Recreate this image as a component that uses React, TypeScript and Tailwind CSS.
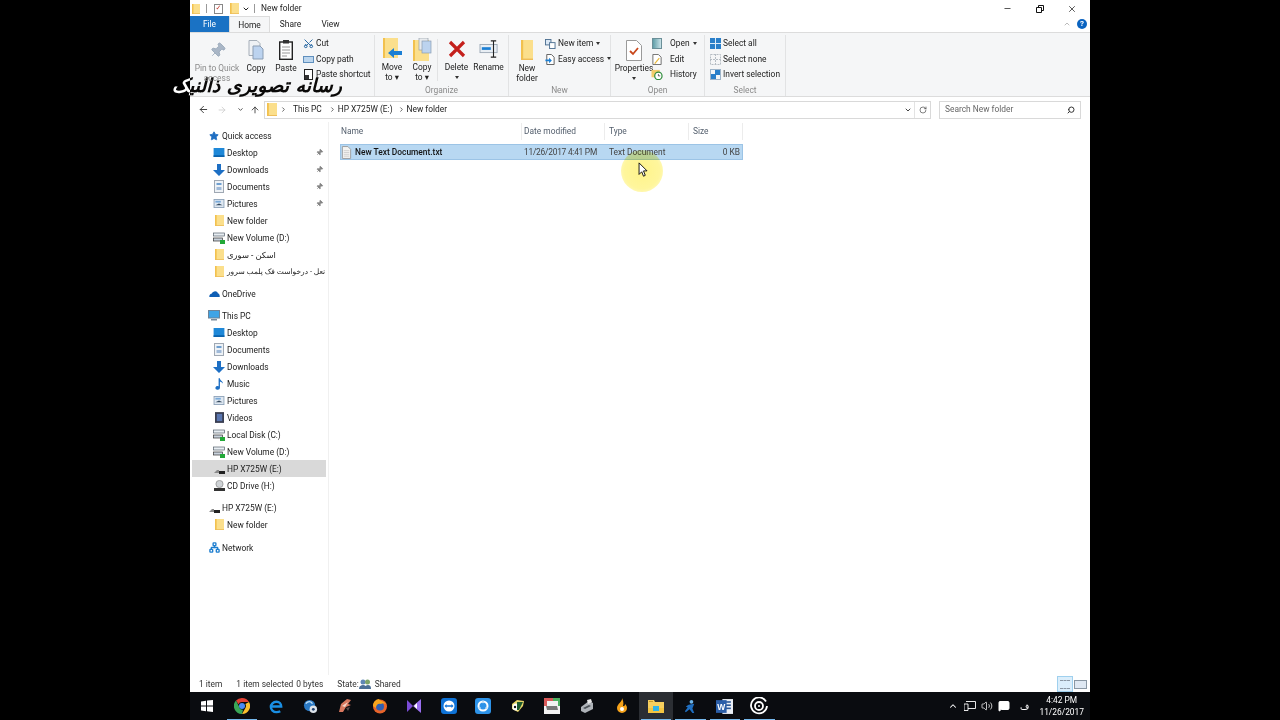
import { ChevronDown, ChevronRight, ChevronUp, ArrowLeft, ArrowRight, ArrowUp, RotateCw, Search, Minus, X, Pin, Scissors, Star, Volume2, MessageSquare, Network } from "lucide-react";

function Folder({ className = "w-[11px] h-[14px]" }: { className?: string }) {
  return (
    <svg viewBox="0 0 11 14" className={className} preserveAspectRatio="none">
      <rect x="0" y="0" width="11" height="14" fill="#fbdf8c" />
      <rect x="0" y="0" width="2" height="14" fill="#f2c14e" />
      <rect x="0" y="13" width="11" height="1" fill="#eebd58" />
    </svg>
  );
}

function DocIcon() {
  return (
    <svg viewBox="0 0 12 14" className="w-[11px] h-[13px]">
      <path d="M1.5.5h6l3 3v10h-9z" fill="#f4f4f2" stroke="#9a9a9a" />
      <path d="M3 5h6M3 7h6M3 9h6M3 11h6" stroke="#cfcfcf" strokeWidth="1" />
    </svg>
  );
}

function DesktopIcon() {
  return (
    <svg viewBox="0 0 12 10" className="w-[12px] h-[9px]">
      <rect width="12" height="10" fill="#1e88d8" />
      <rect y="8" width="12" height="2" fill="#0b63ad" />
    </svg>
  );
}

function DownIcon() {
  return (
    <svg viewBox="0 0 12 12" className="w-[12px] h-[12px]">
      <path d="M4 0h4v6h4l-6 6-6-6h4z" fill="#1d6fc4" />
    </svg>
  );
}

function DocsIcon() {
  return (
    <svg viewBox="0 0 10 13" className="w-[10px] h-[13px]">
      <rect x=".5" y=".5" width="9" height="12" fill="#eef2f6" stroke="#9fa8b3" />
      <rect x="2.5" y="3" width="5" height="2" fill="#6f9fd0" />
      <rect x="2.5" y="7" width="5" height="3" fill="#9fb9d8" />
    </svg>
  );
}

function PicIcon() {
  return (
    <svg viewBox="0 0 12 10" className="w-[12px] h-[9px]">
      <rect x=".5" y=".5" width="11" height="9" fill="#dfe8f2" stroke="#8da2b8" />
      <path d="M2 7l4-2 4 2z" fill="#33475c" />
      <rect x="2" y="2" width="6" height="2" fill="#79a9d8" />
    </svg>
  );
}

function DriveIcon() {
  return (
    <svg viewBox="0 0 12 12" className="w-[12px] h-[12px]">
      <rect x=".5" y="1" width="11" height="3" fill="#e8eef3" stroke="#55606b" strokeWidth=".7" />
      <rect x=".5" y="6" width="9" height="3" fill="#c8d2dc" stroke="#333" strokeWidth=".7" />
      <rect x="7" y="8" width="5" height="4" fill="#22a838" />
    </svg>
  );
}

function UsbIcon() {
  return (
    <svg viewBox="0 0 12 12" className="w-[12px] h-[12px]">
      <path d="M1 10l3-3h2v3z" fill="#8a8a8a" />
      <rect x="6" y="8" width="6" height="3" fill="#222" />
    </svg>
  );
}

function CdIcon() {
  return (
    <svg viewBox="0 0 12 12" className="w-[12px] h-[12px]">
      <circle cx="6.5" cy="4" r="3.6" fill="#cfd3d6" stroke="#777" strokeWidth=".6" />
      <rect x="1" y="8" width="11" height="3" fill="#333" />
    </svg>
  );
}

function NavRow({ icon, label, pinned, sub, selected, tiny }: { icon: React.ReactNode; label: string; pinned?: boolean; sub?: boolean; selected?: boolean; tiny?: boolean }) {
  return (
    <div className={`h-[17px] flex items-center mx-[2px] ${selected ? "bg-[#d9d9d9]" : ""} ${sub ? "pl-[20px]" : "pl-[15px]"}`}>
      <span className="w-[14px] flex justify-center shrink-0">{icon}</span>
      <span className={`ml-[1px] pt-[1px] whitespace-nowrap ${tiny ? "text-[7.5px]" : ""}`}>{label}</span>
      {pinned && <Pin className="ml-auto mr-[3px] w-[7px] h-[7px] text-[#777] rotate-45" fill="#888" />}
    </div>
  );
}

function LargeBtn({ w, icon, lines, caret, gray }: { w: string; icon: React.ReactNode; lines: string[]; caret?: boolean; gray?: boolean }) {
  return (
    <div className={`${w} flex flex-col items-center shrink-0 ${gray ? "text-[#8c8c8c]" : ""}`}>
      <div className="h-[26px] flex items-end justify-center">{icon}</div>
      <div className="mt-[2px] leading-[9.5px] text-center whitespace-nowrap">
        {lines.map((l) => (
          <div key={l}>{l}</div>
        ))}
      </div>
      {caret && <div className="mt-[3px] w-0 h-0 border-x-[2.5px] border-x-transparent border-t-[3px] border-t-[#333]" />}
    </div>
  );
}

function Caret() {
  return <span className="inline-block ml-[3px] mb-[1px] w-0 h-0 border-x-[2.5px] border-x-transparent border-t-[3px] border-t-[#333]" />;
}

function SmallBtn({ icon, label, caret, wide }: { icon: React.ReactNode; label: string; caret?: boolean; wide?: boolean }) {
  return (
    <div className="h-[15.5px] flex items-center whitespace-nowrap">
      <span className="w-[14px] flex justify-center shrink-0">{icon}</span>
      <span className={wide ? "ml-[6px]" : "ml-[1px]"}>{label}</span>
      {caret && <Caret />}
    </div>
  );
}

function Group({ w, label, children }: { w: string; label: string; children: React.ReactNode }) {
  return (
    <div className={`${w} shrink-0 flex flex-col border-r border-[#e2e3e4] h-[61px]`}>
      <div className="flex-1 flex">{children}</div>
      <div className="text-center text-[#8a8a8a] leading-[10px] mb-[1px]">{label}</div>
    </div>
  );
}

function Chrome() {
  return (
    <svg viewBox="0 0 16 16" className="w-[16px] h-[16px]">
      <path d="M8 0a8 8 0 0 1 7 4H8a4 4 0 0 0-3.6 2.2L2 2.6A8 8 0 0 1 8 0z" fill="#e34133" />
      <path d="M15 4a8 8 0 0 1-7 12l3.4-6A4 4 0 0 0 11.4 6z" fill="#fbc02d" />
      <path d="M2 2.6l3 6a4 4 0 0 0 4 3.2L8 16A8 8 0 0 1 2 2.6z" fill="#3aa757" />
      <circle cx="8" cy="8" r="3" fill="#4a8bf5" />
    </svg>
  );
}

const taskIcons: React.ReactNode[] = [
  <svg key="win" viewBox="0 0 12 12" className="w-[12px] h-[12px]"><path d="M0 1.5L5 .8v4.7H0zM6 .6L12 0v5.5H6zM0 6.5h5v4.7l-5-.7zM6 6.5h6V12l-6-.7z" fill="#fff" /></svg>,
  <Chrome key="chrome" />,
  <svg key="edge" viewBox="0 0 16 16" className="w-[15px] h-[15px]"><path d="M3 8h10c0-3-2-5-5-5-3.500 0-6 2.500-6 5.500S4.500 14 8 14c1.500 0 3-.4 4-1" fill="none" stroke="#1a8fe3" strokeWidth="2.600" /></svg>,
  <svg key="ie" viewBox="0 0 16 16" className="w-[15px] h-[15px]"><circle cx="7" cy="7" r="6" fill="#2a79c4" /><path d="M3 5c2-3 6-3 7 0" stroke="#bfe0f7" strokeWidth="1.500" fill="none" /><circle cx="11" cy="11" r="4" fill="#dde4ea" /><circle cx="11" cy="11" r="1.500" fill="#1e3e6b" /></svg>,
  <svg key="sm" viewBox="0 0 16 16" className="w-[16px] h-[16px]"><path d="M2 14L4 6l6-5 4 1-3 4 3 1-5 2-3 5z" fill="#d9785f" /><path d="M5 8l6-4-3 5z" fill="#f3d6c8" /><path d="M9 10l4-1-2 4z" fill="#5b4a4a" /></svg>,
  <svg key="ff" viewBox="0 0 16 16" className="w-[16px] h-[16px]"><circle cx="8" cy="8.500" r="7" fill="#e8642a" /><circle cx="8" cy="8.500" r="4" fill="#2f5fb3" /><path d="M1 8c0-4 3-7 6-7 1 2 5 2 7 5-2-1-4-1-5 0C6 5 4 7 4 10z" fill="#f9a51c" /></svg>,
  <svg key="vs" viewBox="0 0 16 16" className="w-[16px] h-[16px]"><path d="M1 2l6 6-6 6z" fill="#7b4cd8" /><path d="M15 1v14l-8-7z" fill="#9a6ff0" /><path d="M11 5v6L8 8z" fill="#fff" /></svg>,
  <svg key="tv" viewBox="0 0 16 16" className="w-[16px] h-[16px]"><rect width="16" height="16" rx="3" fill="#0e72d6" /><circle cx="8" cy="8" r="5.500" fill="#fff" /><path d="M3.500 8l2-2v1.200h5V6l2 2-2 2V8.800h-5V10z" fill="#0e72d6" /></svg>,
  <svg key="bl" viewBox="0 0 16 16" className="w-[16px] h-[16px]"><rect width="16" height="16" rx="3" fill="#2d93e8" /><circle cx="8" cy="8" r="4.500" fill="none" stroke="#fff" strokeWidth="2" /><circle cx="8" cy="4" r="1.200" fill="#bfe0f7" /><circle cx="4.500" cy="10" r="1.200" fill="#bfe0f7" /><circle cx="11.500" cy="10" r="1.200" fill="#bfe0f7" /></svg>,
  <svg key="cf" viewBox="0 0 16 16" className="w-[16px] h-[16px]"><path d="M2 6l5-4 7 1-1 5-5 6-6-3z" fill="#e8d66a" /><circle cx="6" cy="9" r="3.500" fill="#fff" /><path d="M7 4h6l-4 8H7z" fill="#1c5a2e" /><circle cx="5" cy="9" r="1.200" fill="#111" /></svg>,
  <svg key="hd" viewBox="0 0 16 16" className="w-[16px] h-[16px]"><rect y="3" width="16" height="13" fill="#f2f2f2" /><path d="M2 8h11l1 4H3z" fill="#777" /><path d="M0 0h9v3H3v5H0z" fill="#d95a5a" /><path d="M9 0h7v8H14V3H9z" fill="#4caf60" /></svg>,
  <svg key="pr" viewBox="0 0 16 16" className="w-[16px] h-[16px]"><path d="M2 9l8-6 4 2v6l-8 4-4-2z" fill="#aeb3b8" /><path d="M8 2l4-1 1 3-4 2z" fill="#e8e8e8" /><path d="M4 10l6-3 2 1-6 3z" fill="#4b5157" /></svg>,
  <svg key="fl" viewBox="0 0 16 16" className="w-[16px] h-[16px]"><path d="M9 0c1 3-5 6-5 10a5 5 0 0 0 10 0c0-2-1-3-2-4 0 2-1 2-2 2 1-3 0-6-1-8z" fill="#f5a21a" /><circle cx="9" cy="11" r="2" fill="#fff" /></svg>,
  <svg key="ex" viewBox="0 0 16 14" className="w-[16px] h-[14px]"><path d="M0 1h6l1 2h9v10H0z" fill="#f7cf5e" /><rect y="9" width="16" height="5" fill="#f4c542" /><rect x="5" y="7" width="6" height="5" fill="#30b4e8" /><rect x="1" y="2" width="4" height="1" fill="#c89a2c" /></svg>,
  <svg key="ru" viewBox="0 0 16 16" className="w-[15px] h-[15px]"><circle cx="9" cy="3" r="2" fill="#6db4e8" /><path d="M6 6l6-1-2 5 2 5-2 0-3-4-4 3-1-1 3-4-2-1z" fill="#1f6ec0" /></svg>,
  <svg key="wd" viewBox="0 0 16 16" className="w-[17px] h-[17px]"><rect x="6" y="1" width="10" height="14" fill="#e9eef5" /><rect x="8" y="3" width="6" height="1.500" fill="#2b5797" /><rect x="8" y="6" width="6" height="1.500" fill="#2b5797" /><rect x="8" y="9" width="6" height="1.500" fill="#2b5797" /><rect y="2" width="10" height="12" fill="#2b5ea8" /><text x="5" y="11" fontSize="8" fill="#fff" textAnchor="middle" fontWeight="bold" fontFamily="Liberation Sans">W</text></svg>,
  <svg key="gr" viewBox="0 0 18 18" className="w-[18px] h-[18px]"><path d="M16 4.500A8 8 0 1 0 17 9" fill="none" stroke="#fff" strokeWidth="1.800" /><circle cx="9" cy="9" r="4" fill="none" stroke="#fff" strokeWidth="1.800" /><circle cx="9" cy="9" r="1" fill="#fff" /></svg>,
];

const activeTasks = [1, 13, 14, 15, 16];

export default function App() {
  return (
    <div className="h-screen bg-black flex justify-center overflow-hidden font-['Roboto','DejaVu_Sans',sans-serif] text-[8.4px] text-[#222]">
      <div className="w-[900px] h-[720px] bg-white flex flex-col relative">
        {/* title bar */}
        <div className="h-[16px] flex items-center pl-[2px] pt-[1px] relative shrink-0">
          <Folder className="w-[8px] h-[10px]" />
          <span className="w-px h-[9px] bg-[#999] ml-[6px]" />
          <span className="ml-[7px] w-[9px] h-[10px] border border-[#888] flex items-center justify-center text-[#c0392b] text-[7px] leading-none">✓</span>
          <Folder className="ml-[7px] w-[9px] h-[11px]" />
          <ChevronDown className="ml-[3px] w-[8px] h-[8px] text-[#222]" strokeWidth={3} />
          <span className="w-px h-[9px] bg-[#999] ml-[4px]" />
          <span className="ml-[6px] text-[#222]">New folder</span>
          <div className="ml-auto flex items-center mr-[2px]">
            <Minus className="w-[9px] h-[9px] mr-[24px]" strokeWidth={2} />
            <svg viewBox="0 0 8 8" className="w-[8px] h-[8px] mr-[23px]"><path d="M.5 2.500h5v5h-5zM2.500 2.500v-2h5v5h-2" fill="none" stroke="#111" /></svg>
            <X className="w-[10px] h-[10px] mr-[11px]" strokeWidth={1.800} />
          </div>
        </div>

        {/* tabs */}
        <div className="h-[16px] flex items-stretch shrink-0 leading-[16px]">
          <div className="w-[39px] bg-[#1a72c4] text-white text-center">File</div>
          <div className="w-[41px] text-center border-x border-t border-[#dcdcdc] bg-[#f5f6f7]">Home</div>
          <div className="w-[41px] text-center">Share</div>
          <div className="w-[39px] text-center">View</div>
          <div className="ml-auto flex items-center pr-[3px]">
            <ChevronUp className="w-[8px] h-[8px] text-[#999] mr-[6px]" />
            <span className="w-[10px] h-[10px] rounded-full bg-[#0a63c0] text-white text-[8px] leading-[10px] text-center font-bold">?</span>
          </div>
        </div>

        {/* ribbon */}
        <div className="h-[65px] bg-[#f5f6f7] border-t border-[#dcdcdc] border-b flex shrink-0 pt-[2px]">
          <Group w="w-[185px]" label="">
            <div className="flex pl-[8px] pt-[1px]">
              <LargeBtn w="w-[38px]" gray lines={["Pin to Quick", "access"]} icon={<Pin className="w-[17px] h-[17px] text-[#8fa0b3] rotate-45 mb-[3px]" fill="#a9b6c6" strokeWidth={1} />} />
              <div className="w-[5px]" />
              <LargeBtn w="w-[30px]" lines={["Copy"]} icon={
                <svg viewBox="0 0 16 20" className="w-[16px] h-[20px] mb-[2px]"><path d="M1 .5h8l3 3v12H1z" fill="#eef1f4" stroke="#a5aeb8" /><path d="M5 6h7l3 3v10H5z" fill="#bcd3ef" stroke="#8b9db3" /></svg>
              } />
              <LargeBtn w="w-[30px]" lines={["Paste"]} icon={
                <svg viewBox="0 0 14 20" className="w-[14px] h-[20px] mb-[2px]"><rect x=".7" y="2" width="12.600" height="17.300" fill="#fff" stroke="#222" strokeWidth="1.400" /><rect x="4" y="0" width="6" height="3.500" fill="#333" /><path d="M3 7h8M3 10h8M3 13h8M3 16h5" stroke="#999" /></svg>
              } />
              <div className="flex flex-col">
                <SmallBtn label="Cut" icon={<Scissors className="w-[11px] h-[11px] text-[#1c5f9e] -rotate-90" />} />
                <SmallBtn label="Copy path" icon={<span className="w-[11px] h-[7px] bg-[#bcd6ee] border border-[#5f8fbd]" />} />
                <SmallBtn label="Paste shortcut" icon={<span className="w-[9px] h-[11px] border border-[#222] bg-white flex items-end"><span className="w-[4px] h-[4px] bg-[#333]" /></span>} />
              </div>
            </div>
          </Group>
          <Group w="w-[134px]" label="Organize">
            <div className="flex pl-[2px]">
              <LargeBtn w="w-[30px]" lines={["Move", "to ▾"]} icon={
                <svg viewBox="0 0 19 23" className="w-[19px] h-[23px]"><rect width="15" height="20" fill="#fbdf8c" /><rect width="2" height="20" fill="#f2c14e" /><path d="M19 13h-8v-3l-6 5 6 5v-3h8z" fill="#1b7fd4" /></svg>
              } />
              <LargeBtn w="w-[30px]" lines={["Copy", "to ▾"]} icon={
                <svg viewBox="0 0 19 23" className="w-[19px] h-[23px]"><rect y="2" width="16" height="21" fill="#fbdf8c" /><rect y="2" width="2" height="21" fill="#f2c14e" /><rect x="6" y="0" width="9" height="12" fill="#e8ebee" stroke="#97a0aa" strokeWidth=".7" /><rect x="9" y="3" width="9" height="12" fill="#bcd3ef" stroke="#8b9db3" strokeWidth=".7" /></svg>
              } />
              <div className="w-px h-[42px] bg-[#e2e3e4] mt-[4px]" />
              <LargeBtn w="w-[37px]" lines={["Delete"]} caret icon={
                <svg viewBox="0 0 18 18" className="w-[18px] h-[18px] mb-[3px]"><path d="M2 2l14 14M16 2L2 16" stroke="#c4201c" strokeWidth="3.200" /></svg>
              } />
              <LargeBtn w="w-[27px]" lines={["Rename"]} icon={
                <svg viewBox="0 0 22 20" className="w-[20px] h-[18px] mb-[3px]"><rect x="1" y="5" width="19" height="9" fill="#e8eef4" stroke="#9aa7b4" /><rect x="3" y="8" width="10" height="3" fill="#1b7fd4" /><path d="M13 1h6M16 1v18M13 19h6" stroke="#222" strokeWidth="1.200" fill="none" /></svg>
              } />
            </div>
          </Group>
          <Group w="w-[102px]" label="New">
            <div className="flex pl-[2px] pt-[1px]">
              <LargeBtn w="w-[32px]" lines={["New", "folder"]} icon={<Folder className="w-[12px] h-[20px] mb-[2px]" />} />
              <div className="flex flex-col">
                <SmallBtn caret label="New item" icon={<svg viewBox="0 0 12 11" className="w-[11px] h-[10px]"><rect x=".5" y=".5" width="6" height="6" fill="#dbe8f5" stroke="#4a6d8f" /><rect x="5" y="4" width="6" height="6.500" fill="#fff" stroke="#4a6d8f" /></svg>} />
                <SmallBtn caret label="Easy access" icon={<svg viewBox="0 0 10 12" className="w-[10px] h-[11px]"><path d="M1.500.5h5l3 3v8h-8z" fill="#fff" stroke="#555" /><path d="M0 6h4V4l3 3-3 3V8H0z" fill="#1b7fd4" /></svg>} />
              </div>
            </div>
          </Group>
          <Group w="w-[94px]" label="Open">
            <div className="flex pt-[1px]">
              <LargeBtn w="w-[46px]" lines={["Properties"]} caret icon={
                <svg viewBox="0 0 16 21" className="w-[16px] h-[21px] mb-[1px]"><path d="M.5.500h10l5 5v15H.5z" fill="#fff" stroke="#9a9a9a" /><path d="M4 11l3 3 5-6" stroke="#c9471c" strokeWidth="1.800" fill="none" /></svg>
              } />
              <div className="flex flex-col ml-[-7px]">
                <SmallBtn wide caret label="Open" icon={<span className="w-[10px] h-[11px] bg-gradient-to-r from-[#5f9ea8] to-[#c9e2e8] border border-[#6b8f98]" />} />
                <SmallBtn wide label="Edit" icon={<svg viewBox="0 0 10 12" className="w-[10px] h-[11px]"><path d="M.5.500h6l3 3v8h-9z" fill="#fff" stroke="#666" /><path d="M2 10l5-6 1 1-5 6z" fill="#e8b93c" /></svg>} />
                <SmallBtn wide label="History" icon={<svg viewBox="0 0 12 12" className="w-[12px] h-[11px]"><rect y="1" width="9" height="8" fill="#f2cc6a" /><circle cx="7.500" cy="7.500" r="4" fill="#fff" stroke="#2f8c3c" strokeWidth="1.300" /><path d="M7.500 5.500v2h2" stroke="#333" fill="none" strokeWidth=".8" /></svg>} />
              </div>
            </div>
          </Group>
          <Group w="w-[81px]" label="Select">
            <div className="flex flex-col pl-[3px] pt-[1px]">
              <SmallBtn label="Select all" icon={<svg viewBox="0 0 11 11" className="w-[11px] h-[11px]"><rect width="11" height="11" fill="#2a7fc9" /><path d="M5.500 0v11M0 5.500h11" stroke="#dcecf9" /></svg>} />
              <SmallBtn label="Select none" icon={<svg viewBox="0 0 11 11" className="w-[11px] h-[11px]"><rect x=".5" y=".5" width="10" height="10" fill="none" stroke="#b5bcc3" strokeDasharray="2 1" /><path d="M5.500 0v11M0 5.500h11" stroke="#b5bcc3" strokeDasharray="2 1" /></svg>} />
              <SmallBtn label="Invert selection" icon={<svg viewBox="0 0 11 11" className="w-[11px] h-[11px]"><rect x="5" y="0" width="6" height="6" fill="#2a7fc9" /><rect x="0" y="5" width="6" height="6" fill="#2a7fc9" /><rect x=".5" y=".5" width="10" height="10" fill="none" stroke="#9db4c9" /></svg>} />
            </div>
          </Group>
        </div>

        {/* address bar */}
        <div className="h-[25px] flex items-center shrink-0 pl-[8px] pr-[9px]">
          <ArrowLeft className="w-[11px] h-[11px] text-[#333]" />
          <ArrowRight className="ml-[8px] w-[10px] h-[10px] text-[#ccc]" />
          <ChevronDown className="ml-[10px] w-[7px] h-[7px] text-[#444]" strokeWidth={3} />
          <ArrowUp className="ml-[6px] w-[10px] h-[10px] text-[#333]" />
          <div className="ml-[4px] w-[667px] h-[18px] border border-[#d9d9d9] flex items-center pl-[2px]">
            <Folder className="w-[10px] h-[13px]" />
            <ChevronRight className="ml-[3px] w-[7px] h-[7px] text-[#555]" strokeWidth={3} />
            <span className="ml-[6px]">This PC</span>
            <ChevronRight className="ml-[7px] w-[7px] h-[7px] text-[#555]" strokeWidth={3} />
            <span className="ml-[2px]">HP X725W (E:)</span>
            <ChevronRight className="ml-[5px] w-[7px] h-[7px] text-[#555]" strokeWidth={3} />
            <span className="ml-[2px]">New folder</span>
            <ChevronDown className="ml-auto mr-[2px] w-[8px] h-[8px] text-[#444]" strokeWidth={3} />
            <span className="w-px h-[16px] bg-[#e3e3e3]" />
            <RotateCw className="ml-[4px] mr-[3px] w-[8px] h-[8px] text-[#444]" />
          </div>
          <div className="ml-[8px] flex-1 h-[18px] border border-[#d9d9d9] flex items-center pl-[5px] text-[#666]">
            Search New folder
            <Search className="ml-auto mr-[5px] w-[8px] h-[8px] text-[#333] -scale-x-100" strokeWidth={3} />
          </div>
        </div>

        {/* body */}
        <div className="flex-1 flex min-h-0">
          <div className="w-[139px] border-r border-[#f0f0f0] shrink-0 pt-[5px]">
            <NavRow label="Quick access" icon={<Star className="w-[10px] h-[10px] text-[#1f6fc2]" fill="#1f6fc2" />} />
            <NavRow sub pinned label="Desktop" icon={<DesktopIcon />} />
            <NavRow sub pinned label="Downloads" icon={<DownIcon />} />
            <NavRow sub pinned label="Documents" icon={<DocsIcon />} />
            <NavRow sub pinned label="Pictures" icon={<PicIcon />} />
            <NavRow sub label="New folder" icon={<Folder className="w-[9px] h-[11px]" />} />
            <NavRow sub label="New Volume (D:)" icon={<DriveIcon />} />
            <NavRow sub label="اسکن - سوری" icon={<Folder className="w-[9px] h-[11px]" />} />
            <NavRow sub tiny label="نعل - درخواست فک پلمب سرور" icon={<Folder className="w-[9px] h-[11px]" />} />
            <div className="h-[5px]" />
            <NavRow label="OneDrive" icon={<svg viewBox="0 0 12 8" className="w-[11px] h-[7px]"><path d="M0 8c0-3 2-4 3-4 1-3 6-4 7 0 2 0 2 3 2 4z" fill="#0e5fb5" /></svg>} />
            <div className="h-[5px]" />
            <NavRow label="This PC" icon={<svg viewBox="0 0 12 11" className="w-[12px] h-[11px]"><rect x=".5" y=".5" width="11" height="7.500" fill="#3fa4e6" stroke="#6d8398" /><rect x="3" y="9" width="6" height="1.500" fill="#7a8b9b" /></svg>} />
            <NavRow sub label="Desktop" icon={<DesktopIcon />} />
            <NavRow sub label="Documents" icon={<DocsIcon />} />
            <NavRow sub label="Downloads" icon={<DownIcon />} />
            <NavRow sub label="Music" icon={<svg viewBox="0 0 10 13" className="w-[9px] h-[12px]"><path d="M4 0h1.500c0 3 4 3 3 6-.5-1.500-2-2-3-2v7a2.500 2 0 1 1-1.500-2z" fill="#1d6fc4" /></svg>} />
            <NavRow sub label="Pictures" icon={<PicIcon />} />
            <NavRow sub label="Videos" icon={<svg viewBox="0 0 10 12" className="w-[9px] h-[11px]"><rect width="10" height="12" fill="#3a3f52" /><rect x="2" y="2" width="6" height="8" fill="#5a76b0" /></svg>} />
            <NavRow sub label="Local Disk (C:)" icon={<DriveIcon />} />
            <NavRow sub label="New Volume (D:)" icon={<DriveIcon />} />
            <NavRow sub selected label="HP X725W (E:)" icon={<UsbIcon />} />
            <NavRow sub label="CD Drive (H:)" icon={<CdIcon />} />
            <div className="h-[5px]" />
            <NavRow label="HP X725W (E:)" icon={<UsbIcon />} />
            <NavRow sub label="New folder" icon={<Folder className="w-[9px] h-[11px]" />} />
            <div className="h-[6px]" />
            <NavRow label="Network" icon={<Network className="w-[11px] h-[11px] text-[#1f7fd0]" strokeWidth={3} />} />
          </div>

          <div className="flex-1 pl-[11px] relative">
            <div className="h-[22px] pb-[3px] w-[403px] flex items-center text-[#55606e]">
              <span className="w-[182px] pl-[1px] border-r border-[#ececec] h-[17px] leading-[17px]">Name</span>
              <span className="w-[83px] pl-[2px] border-r border-[#ececec] h-[17px] leading-[17px]">Date modified</span>
              <span className="w-[84px] pl-[4px] border-r border-[#ececec] h-[17px] leading-[17px]">Type</span>
              <span className="w-[54px] pl-[4px] border-r border-[#ececec] h-[17px] leading-[17px]">Size</span>
            </div>
            <div className="h-[16px] w-[403px] flex items-center bg-[#b8d8f2] border border-[#9cc4e6] whitespace-nowrap">
              <span className="w-[182px] flex items-center font-medium text-[#111]">
                <DocIcon />
                <span className="ml-[3px]">New Text Document.txt</span>
              </span>
              <span className="w-[83px] pl-[1px] tracking-[-0.25px] text-[#444]">11/26/2017 4:41 PM</span>
              <span className="w-[84px] pl-[3px] text-[#444]">Text Document</span>
              <span className="w-[52px] pr-[2px] text-right text-[#444]">0 KB</span>
            </div>
          </div>
        </div>

        {/* status bar */}
        <div className="h-[17px] pt-[1px] flex items-center shrink-0 pl-[9px] text-[#333]">
          <span>1 item</span>
          <span className="ml-[14px]">1 item selected</span>
          <span className="ml-[3px]">0 bytes</span>
          <span className="ml-[14px]">State:</span>
          <svg viewBox="0 0 12 10" className="w-[12px] h-[10px]"><circle cx="4" cy="3" r="2.500" fill="#5f87b5" /><circle cx="8.500" cy="3" r="2.500" fill="#7ca36a" /><path d="M0 10c0-3 2-4 4-4s4 1 4 4zM6 10c0-3 1-4 3-4s3 1 3 4z" fill="#4b6f96" /></svg>
          <span className="ml-[4px]">Shared</span>
          <div className="ml-auto flex items-center mr-[3px]">
            <span className="w-[16px] h-[16px] border border-[#9fd0ee] bg-[#dbeefb] flex items-center justify-center"><span className="w-[10px] h-[9px] border-y border-[#8a97a3] border-dashed" /></span>
            <span className="ml-[1px] w-[13px] h-[9px] border border-[#8a97a3] bg-[#dfe8f2]" />
          </div>
        </div>

        {/* taskbar */}
        <div className="h-[28px] bg-[#0a0c10] flex items-stretch shrink-0 text-white">
          {taskIcons.map((icon, i) => (
            <div key={i} className={`w-[34.5px] shrink-0 flex items-center justify-center relative ${i === 13 ? "bg-[#2b2e33]" : ""}`}>
              {icon}
              {activeTasks.includes(i) && <span className="absolute bottom-0 left-[2px] right-[2px] h-[1.500px] bg-[#76b9ed]" />}
            </div>
          ))}
          <div className="ml-auto flex items-center pr-[6px]">
            <ChevronUp className="w-[10px] h-[10px]" strokeWidth={2.500} />
            <svg viewBox="0 0 12 10" className="ml-[6px] w-[12px] h-[10px]"><path d="M2 .500h9.500v7H4M0 3h4v6.500H0z" fill="none" stroke="#fff" strokeWidth=".9" /></svg>
            <Volume2 className="ml-[5px] w-[12px] h-[12px]" strokeWidth={1.500} />
            <MessageSquare className="ml-[5px] w-[12px] h-[12px]" fill="#fff" />
            <span className="ml-[10px] text-[9px] leading-none">ف</span>
            <div className="ml-[10px] text-center leading-[12px]">
              <div>4:42 PM</div>
              <div>11/26/2017</div>
            </div>
          </div>
        </div>

        {/* mouse highlight */}
        <div className="absolute left-[431px] top-[150px] w-[42px] h-[42px] rounded-full bg-[radial-gradient(circle,#fff48a_0%,#fff69c_60%,#fffacb_85%,transparent_100%)] mix-blend-multiply pointer-events-none" />
        <svg viewBox="0 0 12 18" className="absolute left-[448px] top-[162px] w-[11px] h-[16px]"><path d="M1 1v13l3-3 2 5 2-1-2-5h4z" fill="#fff" stroke="#000" /></svg>

        {/* channel mark */}
        <div dir="rtl" className="absolute left-[-18px] top-[73px] w-[170px] text-center whitespace-nowrap text-[19px] leading-[24px] font-bold italic text-white mix-blend-difference font-['DejaVu_Sans',sans-serif]">
          رسانه تصویری ذالنیک
        </div>
      </div>
    </div>
  );
}
